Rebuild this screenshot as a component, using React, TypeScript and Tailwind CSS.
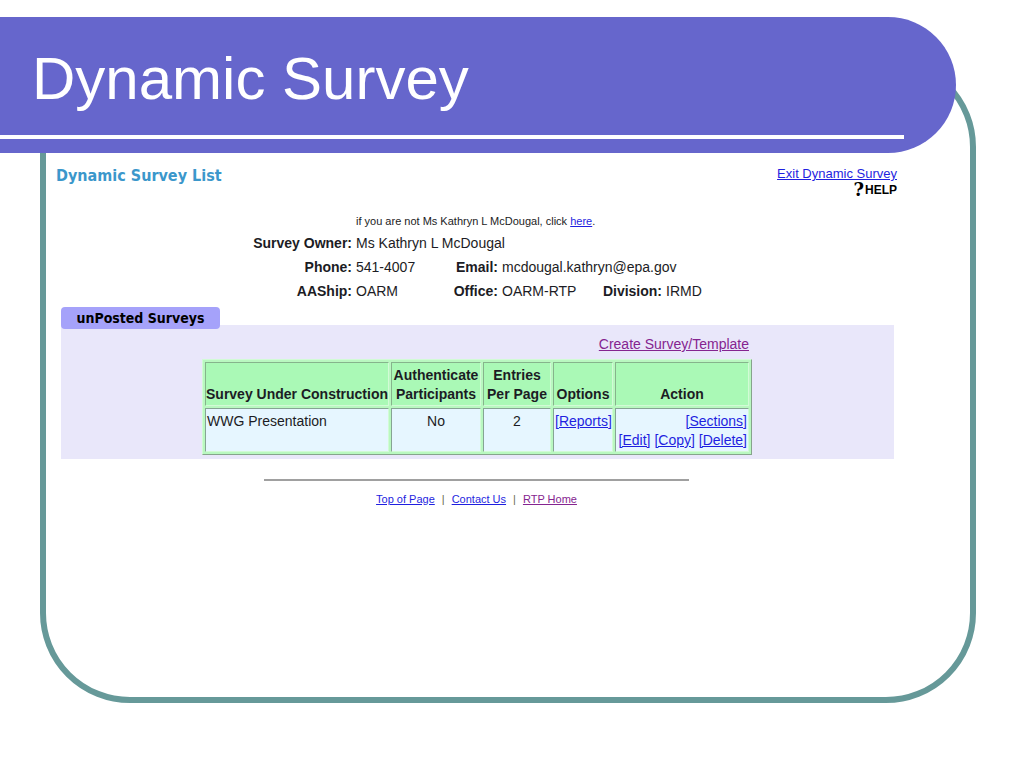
import React from "react";

interface Survey {
  name: string;
  authenticate: string;
  entries: number;
}

interface TextLinkProps {
  children: React.ReactNode;
  visited?: boolean;
}

const surveys: Survey[] = [
  { name: "WWG Presentation", authenticate: "No", entries: 2 },
];

const TextLink: React.FC<TextLinkProps> = ({ children, visited = false }) => (
  <a
    href="#"
    className={`underline ${visited ? "text-[#852490]" : "text-[#1f1fe0]"}`}
  >
    {children}
  </a>
);

const Banner: React.FC = () => (
  <header className="relative z-10 mr-[68px] flex h-[136px] flex-col justify-between rounded-r-full bg-[#6666cc] pt-[26px] pb-[14px]">
    <h1 className="pl-8 text-6xl leading-[72px] text-white">
      Dynamic Survey
    </h1>
    <div className="mr-[52px] h-1 bg-white" />
  </header>
);

const OwnerDetails: React.FC = () => (
  <dl className="mx-auto mt-[13px] grid w-fit grid-cols-[100px_90px_48px_94px_62px_35px] gap-x-1 leading-6 whitespace-nowrap [&>dt]:text-right [&>dt]:font-bold">
    <dd className="col-span-5 col-start-2 text-[11px] leading-5">
      if you are not Ms Kathryn L McDougal, click <TextLink>here</TextLink>.
    </dd>
    <dt>Survey Owner:</dt>
    <dd className="col-span-5">Ms Kathryn L McDougal</dd>
    <dt>Phone:</dt>
    <dd>541-4007</dd>
    <dt>Email:</dt>
    <dd className="col-span-3">mcdougal.kathryn@epa.gov</dd>
    <dt>AAShip:</dt>
    <dd>OARM</dd>
    <dt>Office:</dt>
    <dd>OARM-RTP</dd>
    <dt>Division:</dt>
    <dd>IRMD</dd>
  </dl>
);

const headCell =
  "border border-t-[#86b48c] border-l-[#86b48c] border-r-[#d2fbd6] border-b-[#d2fbd6] bg-[#aaf9b6] pt-[3px] pb-px align-bottom whitespace-nowrap";
const bodyCell =
  "border border-t-[#86a494] border-l-[#86a494] border-r-[#d2fbd6] border-b-[#d2fbd6] bg-[#e6f6ff] px-px pt-[3px] pb-px align-top whitespace-nowrap";

const SurveyTable: React.FC = () => (
  <table className="mt-[5px] w-[550px] table-fixed border-separate border-spacing-[2px] border border-t-[#d2fbd6] border-l-[#d2fbd6] border-r-[#86a48c] border-b-[#86a48c] bg-[#b9f8c0] leading-[19px]">
    <thead>
      <tr>
        <th className={`${headCell} w-[184px]`}>Survey Under Construction</th>
        <th className={`${headCell} w-[90px]`}>
          Authenticate
          <br />
          Participants
        </th>
        <th className={`${headCell} w-[68px]`}>
          Entries
          <br />
          Per Page
        </th>
        <th className={`${headCell} w-[60px]`}>Options</th>
        <th className={headCell}>Action</th>
      </tr>
    </thead>
    <tbody>
      {surveys.map((survey) => (
        <tr key={survey.name}>
          <td className={bodyCell}>{survey.name}</td>
          <td className={`${bodyCell} text-center`}>{survey.authenticate}</td>
          <td className={`${bodyCell} text-center`}>{survey.entries}</td>
          <td className={`${bodyCell} text-center`}>
            <TextLink>[Reports]</TextLink>
          </td>
          <td className={`${bodyCell} text-right`}>
            <TextLink>[Sections]</TextLink>
            <br />
            <TextLink>[Edit]</TextLink> <TextLink>[Copy]</TextLink>{" "}
            <TextLink>[Delete]</TextLink>
          </td>
        </tr>
      ))}
    </tbody>
  </table>
);

export default function App() {
  return (
    <div className="min-h-screen bg-white pt-[17px] pb-16 font-['Liberation_Sans',Arial,sans-serif] text-sm text-[#1c1c24]">
      <Banner />
      <main className="-mt-24 mr-12 ml-10 rounded-[90px] border-6 border-[#669999] pt-[103px] pr-[73px] pb-[188px] pl-[10px]">
        <div className="flex items-start justify-between">
          <h2 className="font-['DejaVu_Sans_Condensed','Noto_Sans',sans-serif] text-base leading-5 font-bold text-[#3b97cb]">
            Dynamic Survey List
          </h2>
          <div className="flex flex-col items-end text-[13px] leading-4">
            <TextLink>Exit Dynamic Survey</TextLink>
            <button
              type="button"
              className="flex h-4 items-center gap-px text-xs font-bold text-black"
            >
              <span className="font-['DejaVu_Serif',serif] text-lg leading-4">
                ?
              </span>
              HELP
            </button>
          </div>
        </div>

        <OwnerDetails />

        <section className="mt-1 mr-[3px] ml-[5px]">
          <h3 className="relative w-[159px] rounded bg-[#a5a2fa] text-center font-['DejaVu_Sans_Condensed','Noto_Sans',sans-serif] leading-[22px] font-bold text-black">
            unPosted Surveys
          </h3>
          <div className="-mt-1 flex justify-center bg-[#e9e7fa] pt-[9px] pr-px pb-1">
            <div>
              <p className="pr-[3px] text-right leading-5">
                <TextLink visited>Create Survey/Template</TextLink>
              </p>
              <SurveyTable />
            </div>
          </div>
        </section>

        <footer className="mt-5 text-center text-[11px] leading-5">
          <hr className="mx-auto mb-2 w-[425px] border-t-2 border-[#a0a0a0]" />
          <TextLink>Top of Page</TextLink>
          <span className="px-[7px] text-[#6a6a50]">|</span>
          <TextLink>Contact Us</TextLink>
          <span className="px-[7px] text-[#6a6a50]">|</span>
          <TextLink visited>RTP Home</TextLink>
        </footer>
      </main>
    </div>
  );
}
